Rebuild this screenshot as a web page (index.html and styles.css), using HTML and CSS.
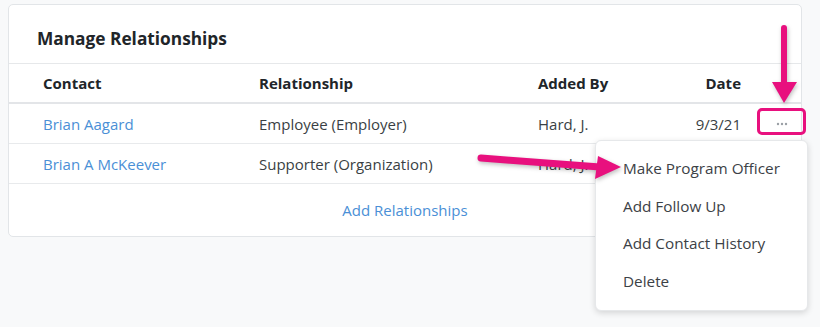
FILE: index.html
```html
<!DOCTYPE html>
<html lang="en">
<head>
    <meta charset="UTF-8">
    <meta name="viewport" content="width=device-width, initial-scale=1.0">
    <title>Manage Relationships</title>
    <link rel="stylesheet" href="styles.css">
</head>
<body>
    <div class="card">
        <div class="card-header">Manage Relationships</div>
        <div class="row head">
            <span>Contact</span>
            <span>Relationship</span>
            <span>Added By</span>
            <span class="date">Date</span>
            <span></span>
        </div>
        <div class="row">
            <a class="link">Brian Aagard</a>
            <span>Employee (Employer)</span>
            <span>Hard, J.</span>
            <span class="date">9/3/21</span>
            <span class="actions">
                <svg width="12" height="4" viewBox="0 0 12 4"><circle cx="2" cy="2" r="1.2"/><circle cx="6" cy="2" r="1.2"/><circle cx="10" cy="2" r="1.2"/></svg>
            </span>
        </div>
        <div class="row">
            <a class="link">Brian A McKeever</a>
            <span>Supporter (Organization)</span>
            <span>Hard, J.</span>
            <span class="date">9/3/21</span>
            <span></span>
        </div>
        <div class="card-footer"><a class="link">Add Relationships</a></div>
    </div>

    <div class="menu">
        <div class="menu-item">Make Program Officer</div>
        <div class="menu-item">Add Follow Up</div>
        <div class="menu-item">Add Contact History</div>
        <div class="menu-item">Delete</div>
    </div>

    <div class="highlight"></div>
    <svg class="arrows" width="820" height="327" viewBox="0 0 820 327">
        <line x1="784" y1="28" x2="784" y2="86" stroke="#e8107e" stroke-width="6" stroke-linecap="round"/>
        <polygon points="772,82 797,82 784,103" fill="#e8107e"/>
        <line x1="481" y1="158" x2="600" y2="167" stroke="#e8107e" stroke-width="7" stroke-linecap="round"/>
        <polygon points="598,156 621,167 595,179" fill="#e8107e"/>
    </svg>
</body>
</html>
```

FILE: styles.css
```css
body {
    margin: 0;
    padding: 4px 18px 0 8px;
    background: #f8f9fa;
    font-family: "Open Sans", Arial, sans-serif;
    font-size: 15px;
    color: #3a3f44;
    height: 327px;
    box-sizing: border-box;
    overflow: hidden;
    position: relative;
}
.card {
    background: #fff;
    border: 1px solid #e2e5e8;
    border-radius: 5px;
}
.card-header {
    height: 59px;
    box-sizing: border-box;
    padding: 8px 0 0 28px;
    display: flex;
    align-items: center;
    font-size: 17.3px;
    font-weight: bold;
    color: #212529;
    border-bottom: 1px solid #e6e8ea;
}
.row {
    display: grid;
    grid-template-columns: 216px 279px 103px 100px 1fr;
    align-items: center;
    padding-left: 34px;
    height: 39px;
    border-bottom: 1px solid #e8eaec;
}
.row.head {
    font-weight: bold;
    color: #212529;
    border-bottom: 2px solid #e3e5e8;
    height: 38px;
}
.date {
    text-align: right;
}
.link {
    color: #4a8fd6;
    text-decoration: none;
}
.actions {
    display: flex;
    justify-content: center;
    padding-left: 22px;
}
.actions svg {
    fill: #9a9fa5;
}
.card-footer {
    height: 52px;
    display: flex;
    align-items: center;
    justify-content: center;
}
.menu {
    position: absolute;
    left: 595px;
    top: 140px;
    width: 213px;
    box-sizing: border-box;
    padding: 8px 0 10px;
    background: #fff;
    border: 1px solid #e6e8ea;
    border-radius: 6px;
    box-shadow: 0 2px 6px rgba(0, 0, 0, 0.15);
}
.menu-item {
    height: 37.7px;
    display: flex;
    align-items: center;
    padding-left: 27px;
    font-size: 15.3px;
    color: #3c4146;
}
.highlight {
    position: absolute;
    left: 757px;
    top: 108px;
    width: 49px;
    height: 27px;
    box-sizing: border-box;
    border: 3px solid #e8107e;
    border-radius: 5px;
}
.arrows {
    position: absolute;
    left: 0;
    top: 0;
    filter: drop-shadow(1px 2px 2px rgba(0, 0, 0, 0.25));
}
```
